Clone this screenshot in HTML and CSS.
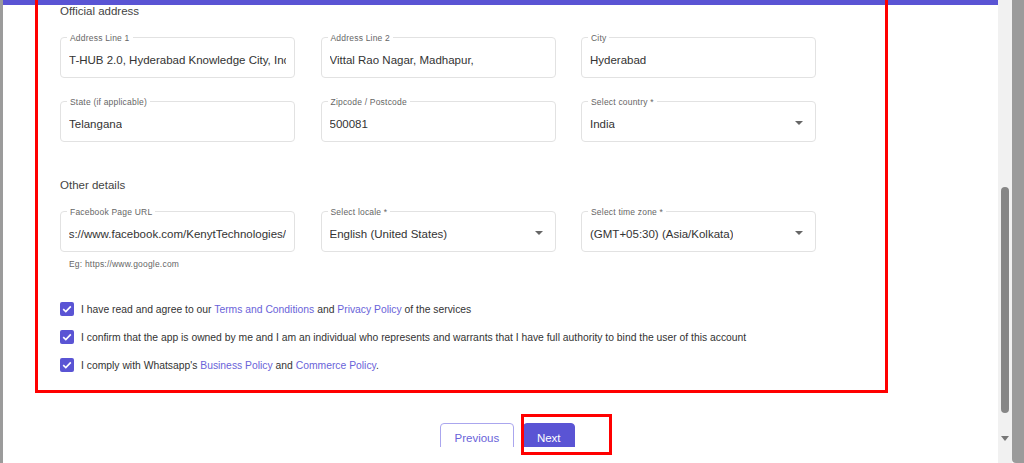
FILE: index.html
```html
<!DOCTYPE html>
<html lang="en">
<head>
  <meta charset="UTF-8" />
  <meta name="viewport" content="width=device-width, initial-scale=1.0"/>
  <title>Business details</title>
  <link rel="stylesheet" href="styles.css">
</head>
<body>
  <div class="screen">
    <div class="edge"></div>

    <main class="panel">
      <div class="topbar"></div>

      <section class="form">
        <h3 class="group-title">Official address</h3>
        <div class="grid">
          <div class="field">
            <span class="field-label">Address Line 1</span>
            <span class="field-value">T-HUB 2.0, Hyderabad Knowledge City, Inc</span>
          </div>
          <div class="field">
            <span class="field-label">Address Line 2</span>
            <span class="field-value">Vittal Rao Nagar, Madhapur,</span>
          </div>
          <div class="field">
            <span class="field-label">City</span>
            <span class="field-value">Hyderabad</span>
          </div>
          <div class="field">
            <span class="field-label">State (if applicable)</span>
            <span class="field-value">Telangana</span>
          </div>
          <div class="field">
            <span class="field-label">Zipcode / Postcode</span>
            <span class="field-value">500081</span>
          </div>
          <div class="field select">
            <span class="field-label">Select country *</span>
            <span class="field-value">India</span>
            <span class="caret"></span>
          </div>
        </div>

        <h3 class="group-title second">Other details</h3>
        <div class="grid top">
          <div>
            <div class="field">
              <span class="field-label">Facebook Page URL</span>
              <span class="field-value scrolled"><span>https://www.facebook.com/KenytTechnologies/</span></span>
            </div>
            <p class="hint">Eg: https://www.google.com</p>
          </div>
          <div class="field select">
            <span class="field-label">Select locale *</span>
            <span class="field-value">English (United States)</span>
            <span class="caret"></span>
          </div>
          <div class="field select">
            <span class="field-label">Select time zone *</span>
            <span class="field-value">(GMT+05:30) (Asia/Kolkata)</span>
            <span class="caret"></span>
          </div>
        </div>

        <div class="checks">
          <label class="check">
            <span class="box"><svg viewBox="0 0 14 14" width="14" height="14"><path d="M3.2 7.2 L5.8 9.6 L10.8 4.4" fill="none" stroke="#fff" stroke-width="1.6"/></svg></span>
            <span>I have read and agree to our <a href="#">Terms and Conditions</a> and <a href="#">Privacy Policy</a> of the services</span>
          </label>
          <label class="check">
            <span class="box"><svg viewBox="0 0 14 14" width="14" height="14"><path d="M3.2 7.2 L5.8 9.6 L10.8 4.4" fill="none" stroke="#fff" stroke-width="1.6"/></svg></span>
            <span>I confirm that the app is owned by me and I am an individual who represents and warrants that I have full authority to bind the user of this account</span>
          </label>
          <label class="check">
            <span class="box"><svg viewBox="0 0 14 14" width="14" height="14"><path d="M3.2 7.2 L5.8 9.6 L10.8 4.4" fill="none" stroke="#fff" stroke-width="1.6"/></svg></span>
            <span>I comply with Whatsapp's <a href="#">Business Policy</a> and <a href="#">Commerce Policy</a>.</span>
          </label>
        </div>
      </section>

      <div class="actions">
        <button class="btn btn-outline">Previous</button>
        <button class="btn btn-primary">Next</button>
      </div>

      <div class="mark mark-form"></div>
      <div class="mark mark-next"></div>
    </main>

    <div class="scrollbar">
      <div class="thumb"></div>
      <div class="arrow"></div>
    </div>
    <div class="edge edge-right"></div>
  </div>
</body>
</html>
```

FILE: styles.css
```css
body {
  margin: 0;
  font-family: "Liberation Sans", Arial, sans-serif;
  background: #fff;
}
.screen {
  display: flex;
  height: 463px;
  overflow: hidden;
}
.edge {
  width: 3px;
  background: #9b9b9b;
}
.edge-right {
  width: 12px;
  border-bottom-left-radius: 4px;
}
.panel {
  flex: 1;
  position: relative;
  background: #fff;
}
.topbar {
  height: 5px;
  background: #5a54d4;
}
.form {
  padding-left: 57px;
}
.group-title {
  margin: 0 0 19px;
  font-size: 11.5px;
  line-height: 13px;
  font-weight: normal;
  color: #444;
}
.group-title.second {
  margin: 37px 0 19px;
}
.grid {
  display: grid;
  grid-template-columns: repeat(3, 235px);
  column-gap: 25.5px;
  row-gap: 23px;
}
.grid.top {
  align-items: start;
}
.field {
  position: relative;
  height: 41px;
  box-sizing: border-box;
  border: 1px solid #e2e2e2;
  border-radius: 4px;
  display: flex;
  align-items: center;
  padding: 5px 8px 0;
}
.field-label {
  position: absolute;
  top: -4px;
  left: 6px;
  padding: 0 3px;
  background: #fff;
  font-size: 8.5px;
  line-height: 8px;
  letter-spacing: 0.2px;
  color: #666;
}
.field-value {
  font-size: 11.5px;
  color: #333;
  white-space: nowrap;
  overflow: hidden;
}
.field-value.scrolled {
  display: flex;
  justify-content: flex-end;
  width: 100%;
}
.field-value.scrolled span {
  flex-shrink: 0;
}
.caret {
  position: absolute;
  right: 12px;
  top: 19px;
  border-left: 4px solid transparent;
  border-right: 4px solid transparent;
  border-top: 4px solid #666;
}
.hint {
  margin: 6px 0 0 9px;
  font-size: 8.5px;
  line-height: 12px;
  color: #666;
  letter-spacing: 0.2px;
}
.checks {
  margin-top: 25px;
}
.check {
  display: flex;
  align-items: center;
  height: 28px;
  font-size: 10.35px;
  color: #333;
  white-space: nowrap;
}
.check a {
  color: #6a63d9;
  text-decoration: none;
}
.box {
  width: 14px;
  height: 14px;
  margin-right: 7px;
  border-radius: 2px;
  background: #5a54d4;
  display: flex;
}
.actions {
  display: flex;
  gap: 9px;
  margin-top: 44px;
  padding-left: 437px;
  height: 24px;
  overflow: hidden;
}
.btn {
  height: 30px;
  padding: 0 13.5px;
  font-family: inherit;
  font-size: 11.5px;
  border-radius: 4px;
  cursor: pointer;
}
.btn-outline {
  background: #fff;
  border: 1px solid #aaa6ee;
  color: #6a63d9;
}
.btn-primary {
  width: 52px;
  padding: 0;
  background: #5a54d4;
  border: 1px solid #5a54d4;
  color: #fff;
}
.mark {
  position: absolute;
  border: 3px solid #ff0000;
  pointer-events: none;
}
.mark-form {
  left: 32px;
  top: -10px;
  width: 847px;
  height: 397px;
}
.mark-next {
  left: 518px;
  top: 414px;
  width: 85px;
  height: 35px;
}
.scrollbar {
  width: 14px;
  background: #f1f1f1;
  position: relative;
}
.thumb {
  position: absolute;
  left: 3px;
  top: 187px;
  width: 8px;
  height: 226px;
  border-radius: 4px;
  background: #868686;
}
.arrow {
  position: absolute;
  left: 3px;
  top: 436px;
  border-left: 4px solid transparent;
  border-right: 4px solid transparent;
  border-top: 5px solid #777;
}
```
